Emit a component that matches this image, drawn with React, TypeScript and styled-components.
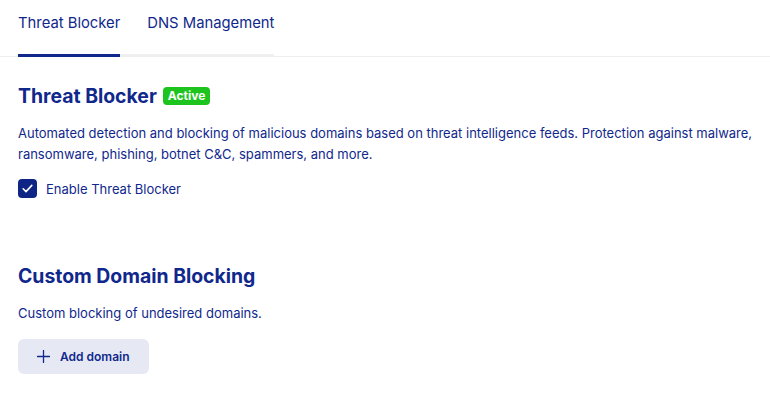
import { createGlobalStyle } from "styled-components";
import styled from "styled-components";

const navy = "#10288c";

const GlobalStyle = createGlobalStyle`
	body {
		margin: 0;
		background: #fff;
		font-family: Inter, "Noto Sans", sans-serif;
		color: ${navy};
	}
`;

const App = () => {
	return (
		<Page>
			<GlobalStyle />
			<TabBar>
				<TabList>
					<Tab active>Threat Blocker</Tab>
					<Tab>DNS Management</Tab>
				</TabList>
			</TabBar>

			<Section>
				<TitleRow>
					<Title>Threat Blocker</Title>
					<Badge>Active</Badge>
				</TitleRow>
				<Text>
					Automated detection and blocking of malicious domains based on threat intelligence feeds. Protection
					against malware, ransomware, phishing, botnet C&amp;C, spammers, and more.
				</Text>
				<CheckRow>
					<CheckBox>
						<svg width="13" height="13" viewBox="0 0 13 13" fill="none">
							<path d="M2.2 6.8L5 9.6L10.8 3.4" stroke="#fff" strokeWidth="1.6" strokeLinecap="round" strokeLinejoin="round" />
						</svg>
					</CheckBox>
					Enable Threat Blocker
				</CheckRow>
			</Section>

			<Section spaced>
				<Title>Custom Domain Blocking</Title>
				<Text>Custom blocking of undesired domains.</Text>
				<AddButton>
					<svg width="13" height="13" viewBox="0 0 13 13" fill="none">
						<path d="M6.5 0.5V12.5M0.5 6.5H12.5" stroke={navy} strokeWidth="1.3" strokeLinecap="round" />
					</svg>
					Add domain
				</AddButton>
			</Section>
		</Page>
	);
};

const Page = styled.div`
	width: 770px;
	min-height: 399px;
	box-sizing: border-box;
`;

const TabBar = styled.div`
	border-bottom: 1px solid #eeeeee;
	padding: 0 18px;
`;

const TabList = styled.div`
	display: inline-flex;
	gap: 27px;
	border-bottom: 3px solid #efefef;
	margin-bottom: -1px;
`;

interface ITab {
	active?: boolean;
}

const Tab = styled.div<ITab>`
	font-size: 14.8px;
	line-height: 20px;
	padding: 13px 0 21px;
	margin-bottom: -3px;
	border-bottom: 3px solid ${(props) => (props.active ? "#10288c" : "transparent")};
	color: ${navy};
`;

interface ISection {
	spaced?: boolean;
}

const Section = styled.section<ISection>`
	padding: 0 8px 0 18px;
	margin-top: ${(props) => (props.spaced ? "65px" : "26px")};
`;

const TitleRow = styled.div`
	display: flex;
	align-items: center;
	gap: 6px;
`;

const Title = styled.h2`
	margin: 0;
	font-size: 19.4px;
	line-height: 26px;
	font-weight: 700;
	color: ${navy};
`;

const Badge = styled.span`
	background: #1ec41e;
	color: #fff;
	font-size: 12px;
	font-weight: 700;
	line-height: 18px;
	padding: 0 5px;
	border-radius: 4px;
`;

const Text = styled.p`
	margin: 14px 0 0;
	font-size: 13px;
	line-height: 21px;
`;

const CheckRow = styled.label`
	display: flex;
	align-items: center;
	gap: 9px;
	margin-top: 14px;
	font-size: 13px;
`;

const CheckBox = styled.span`
	width: 19px;
	height: 19px;
	border-radius: 4px;
	background: #0e2585;
	display: flex;
	align-items: center;
	justify-content: center;
`;

const AddButton = styled.button`
	display: flex;
	align-items: center;
	gap: 10px;
	margin-top: 15px;
	height: 35px;
	padding: 0 19px;
	border: none;
	border-radius: 6px;
	background: #e6e8f4;
	color: ${navy};
	font-family: Inter, sans-serif;
	font-size: 12px;
	font-weight: 600;
`;

export default App;
